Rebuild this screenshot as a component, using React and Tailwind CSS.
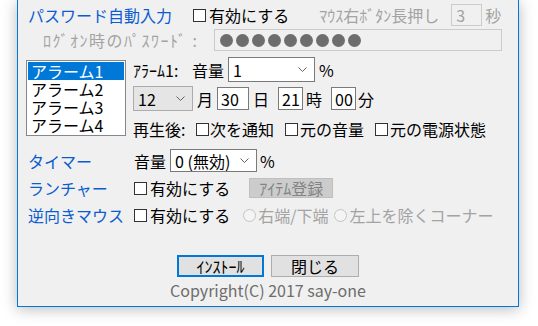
import React from 'react';

const font = { fontFamily: '"Noto Sans CJK JP", "Noto Sans", sans-serif' };

const Check = () => (
  <span className="inline-block w-[13px] h-[13px] border border-[#333333] bg-white shrink-0" />
);

const Radio = () => (
  <span className="inline-block w-[13px] h-[13px] rounded-full border border-[#c4c4c4] bg-[#f4f4f4] shrink-0" />
);

const Chevron = () => (
  <svg width="9" height="5" viewBox="0 0 9 5" className="shrink-0">
    <polyline points="0.5,0.5 4.5,4.5 8.5,0.5" fill="none" stroke="#606060" strokeWidth="1" />
  </svg>
);

const Select = ({ value, className }) => (
  <div className={`flex items-center justify-between pl-[4px] pr-[7px] ${className}`}>
    <span>{value}</span>
    <Chevron />
  </div>
);

const Field = ({ value, className }) => (
  <div className={`flex items-center pl-[3px] bg-white border border-[#7a7a7a] ${className}`}>{value}</div>
);

const Label = ({ children }) => (
  <div className="w-[115px] pl-[10px] text-[#0a5ccf] shrink-0">{children}</div>
);

const alarms = ['アラーム1', 'アラーム2', 'アラーム3', 'アラーム4'];

export default function App() {
  return (
    <div className="w-[538px] h-[326px] bg-white overflow-hidden text-[16px] leading-none text-black" style={font}>
      <div className="ml-[17px] w-[502px] h-[307px] bg-[#f0f0f0] border-x border-b border-[#0078d7] shadow-[0_2px_14px_rgba(0,0,0,0.28)] flex flex-col">
        {/* password auto input */}
        <div className="mt-[4px] h-[22px] flex items-center pl-[10px]">
          <span className="w-[165px] text-[#0a5ccf]">パスワード自動入力</span>
          <Check />
          <span className="ml-[3px]">有効にする</span>
          <span className="ml-[30px] w-[132px] text-[#a3a3a3]">ﾏｳｽ右ﾎﾞﾀﾝ長押し</span>
          <div className="w-[31px] h-[22px] border border-[#cccccc] text-[#a3a3a3] flex items-center pl-[4px]">3</div>
          <span className="ml-[3px] text-[#a3a3a3]">秒</span>
        </div>

        <div className="mt-[3px] h-[22px] flex items-center pl-[25px]">
          <span className="w-[171px] text-[#a3a3a3] tracking-[1.5px]">ﾛｸﾞｵﾝ時のﾊﾟｽﾜｰﾄﾞ :</span>
          <div className="w-[288px] h-[22px] border border-[#cccccc] flex items-center gap-[3px] pl-[5px]">
            {[...Array(9)].map((_, i) => (
              <span key={i} className="w-[13px] h-[13px] rounded-full bg-[#6d6d6d]" />
            ))}
          </div>
        </div>

        {/* alarms */}
        <div className="mt-[6px] flex">
          <div className="w-[115px] pl-[8px] shrink-0">
            <div className="mt-[3px] w-[100px] h-[76px] border border-[#828790] bg-white p-[1px]">
              {alarms.map((a, i) => (
                <div key={a} className={`h-[18px] leading-[18px] pl-[3px] ${i === 0 ? 'bg-[#0078d7] text-white' : ''}`}>
                  {a}
                </div>
              ))}
            </div>
          </div>
          <div className="flex flex-col">
            <div className="h-[25px] flex items-center">
              <span className="w-[59px]">ｱﾗｰﾑ1:</span>
              <span>音量</span>
              <Select value="1" className="ml-[4px] w-[87px] h-[25px] bg-white border border-[#7a7a7a]" />
              <span className="ml-[4px]">%</span>
            </div>
            <div className="mt-[4px] h-[25px] flex items-center">
              <Select value="12" className="w-[60px] h-[25px] bg-[#e5e5e5] border border-[#acacac]" />
              <span className="ml-[4px]">月</span>
              <Field value="30" className="ml-[4px] w-[32px] h-[23px]" />
              <span className="ml-[4px]">日</span>
              <Field value="21" className="ml-[9px] w-[25px] h-[23px]" />
              <span className="ml-[3px]">時</span>
              <Field value="00" className="ml-[9px] w-[25px] h-[23px]" />
              <span className="ml-[2px]">分</span>
            </div>
            <div className="mt-[7px] h-[22px] flex items-center">
              <span className="w-[63px]">再生後:</span>
              <Check />
              <span className="ml-[1px]">次を通知</span>
              <span className="ml-[11px] flex"><Check /></span>
              <span className="ml-[2px]">元の音量</span>
              <span className="ml-[11px] flex"><Check /></span>
              <span className="ml-[2px]">元の電源状態</span>
            </div>
          </div>
        </div>

        {/* timer */}
        <div className="mt-[9px] h-[23px] flex items-center">
          <Label>タイマー</Label>
          <span className="ml-[1px]">音量</span>
          <Select value="0 (無効)" className="ml-[4px] w-[87px] h-[23px] bg-white border border-[#7a7a7a]" />
          <span className="ml-[3px]">%</span>
        </div>

        {/* launcher */}
        <div className="mt-[6px] h-[20px] flex items-center">
          <Label>ランチャー</Label>
          <span className="ml-[1px] flex"><Check /></span>
          <span className="ml-[3px]">有効にする</span>
          <div className="ml-[19px] w-[84px] h-[20px] bg-[#cccccc] border border-[#bfbfbf] text-[#838383] flex items-center justify-center">
            ｱｲﾃﾑ登録
          </div>
        </div>

        {/* reverse mouse */}
        <div className="mt-[6px] h-[22px] flex items-center">
          <Label>逆向きマウス</Label>
          <span className="ml-[1px] flex"><Check /></span>
          <span className="ml-[3px]">有効にする</span>
          <span className="ml-[13px] flex"><Radio /></span>
          <span className="ml-[2px] text-[#a3a3a3]">右端/下端</span>
          <span className="ml-[6px] flex"><Radio /></span>
          <span className="ml-[2px] text-[#a3a3a3]">左上を除くコーナー</span>
        </div>

        {/* buttons */}
        <div className="mt-[29px] h-[22px] flex justify-center gap-[7px]">
          <div className="w-[87px] h-[22px] bg-[#e1e1e1] border-2 border-[#0078d7] flex items-center justify-center">ｲﾝｽﾄｰﾙ</div>
          <div className="w-[88px] h-[22px] bg-[#e1e1e1] border border-[#adadad] flex items-center justify-center">閉じる</div>
        </div>
        <div className="mt-[5px] h-[16px] flex items-center justify-center text-[#6d6d6d]">Copyright(C) 2017 say-one</div>
      </div>
    </div>
  );
}
